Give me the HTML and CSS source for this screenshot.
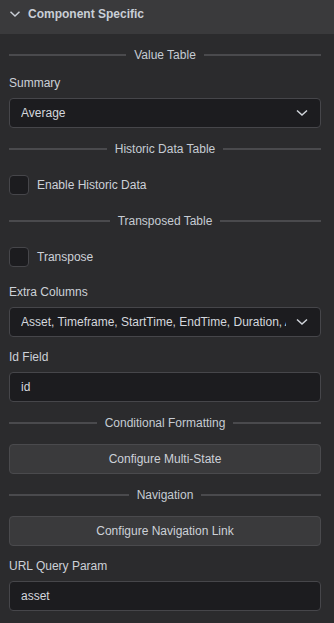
FILE: index.html
```html
<!DOCTYPE html>
<html>
<head>
<meta charset="utf-8">
<link rel="stylesheet" href="styles.css">
</head>
<body>
<div class="panel">
  <div class="panel-header">
    <svg class="hdr-chev" width="12" height="8" viewBox="0 0 12 8"><path d="M1.5 1.8 L6 6 L10.5 1.8" fill="none" stroke="#c9ced6" stroke-width="1.5"/></svg>
    <span class="hdr-title">Component Specific</span>
  </div>
  <div class="panel-body">
    <div class="divider"><span>Value Table</span></div>
    <div class="field">
      <label class="lbl">Summary</label>
      <div class="control select"><span class="val">Average</span><svg class="chev" width="12" height="8" viewBox="0 0 12 8"><path d="M1 1.5 L6 6 L11 1.5" fill="none" stroke="#d0d4da" stroke-width="1.5"/></svg></div>
    </div>
    <div class="divider"><span>Historic Data Table</span></div>
    <div class="check-row"><span class="box"></span><span class="check-lbl">Enable Historic Data</span></div>
    <div class="divider"><span>Transposed Table</span></div>
    <div class="check-row"><span class="box"></span><span class="check-lbl">Transpose</span></div>
    <div class="field">
      <label class="lbl">Extra Columns</label>
      <div class="control select"><span class="val">Asset, Timeframe, StartTime, EndTime, Duration, Avg</span><svg class="chev" width="12" height="8" viewBox="0 0 12 8"><path d="M1 1.5 L6 6 L11 1.5" fill="none" stroke="#d0d4da" stroke-width="1.5"/></svg></div>
    </div>
    <div class="field">
      <label class="lbl">Id Field</label>
      <div class="control input"><span class="val">id</span></div>
    </div>
    <div class="divider"><span>Conditional Formatting</span></div>
    <div class="btn">Configure Multi-State</div>
    <div class="divider"><span>Navigation</span></div>
    <div class="btn">Configure Navigation Link</div>
    <div class="field">
      <label class="lbl">URL Query Param</label>
      <div class="control input"><span class="val">asset</span></div>
    </div>
  </div>
</div>
</body>
</html>
```

FILE: styles.css
```css
html, body {
  margin: 0;
  padding: 0;
  background: #2b2b2d;
}
body {
  font-family: "Liberation Sans", Arial, sans-serif;
  font-size: 12px;
  color: #cdd1d8;
}
.panel {
  width: 334px;
}
.panel-header {
  height: 34px;
  background: #3a3a3c;
  display: flex;
  align-items: center;
  padding: 0 0 6px 9px;
  box-sizing: border-box;
}
.hdr-chev {
  margin-right: 7px;
}
.hdr-title {
  font-weight: bold;
  font-size: 12px;
  line-height: 14px;
  color: #c9ced6;
}
.panel-body {
  display: flex;
  flex-direction: column;
  gap: 13.5px;
  padding: 13.5px 13px 12px 9px;
}
.divider {
  display: flex;
  align-items: center;
  height: 15px;
  gap: 8px;
}
.divider::before, .divider::after {
  content: "";
  flex: 1;
  height: 2px;
  background: #4a4a4d;
}
.divider span {
  color: #c6cbd3;
  white-space: nowrap;
}
.field {
  display: flex;
  flex-direction: column;
  gap: 6.5px;
}
.lbl {
  line-height: 15px;
  color: #cdd1d8;
}
.control {
  height: 30px;
  box-sizing: border-box;
  border: 1px solid #46464a;
  border-radius: 4px;
  background: #1c1c1f;
  display: flex;
  align-items: center;
  padding: 0 12px 0 11px;
  color: #d4d7dd;
}
.control .val {
  flex: 1;
  white-space: nowrap;
  overflow: hidden;
  min-width: 0;
}
.select .chev {
  margin-left: 10px;
  flex: none;
}
.check-row {
  height: 30px;
  display: flex;
  align-items: center;
  gap: 8px;
}
.box {
  width: 20px;
  height: 20px;
  box-sizing: border-box;
  border: 1px solid #46464a;
  border-radius: 4px;
  background: #1c1c1f;
}
.btn {
  height: 30px;
  box-sizing: border-box;
  border: 1px solid #4a4a4d;
  border-radius: 4px;
  background: #3a3a3c;
  display: flex;
  align-items: center;
  justify-content: center;
  color: #cdd1d8;
}
```
